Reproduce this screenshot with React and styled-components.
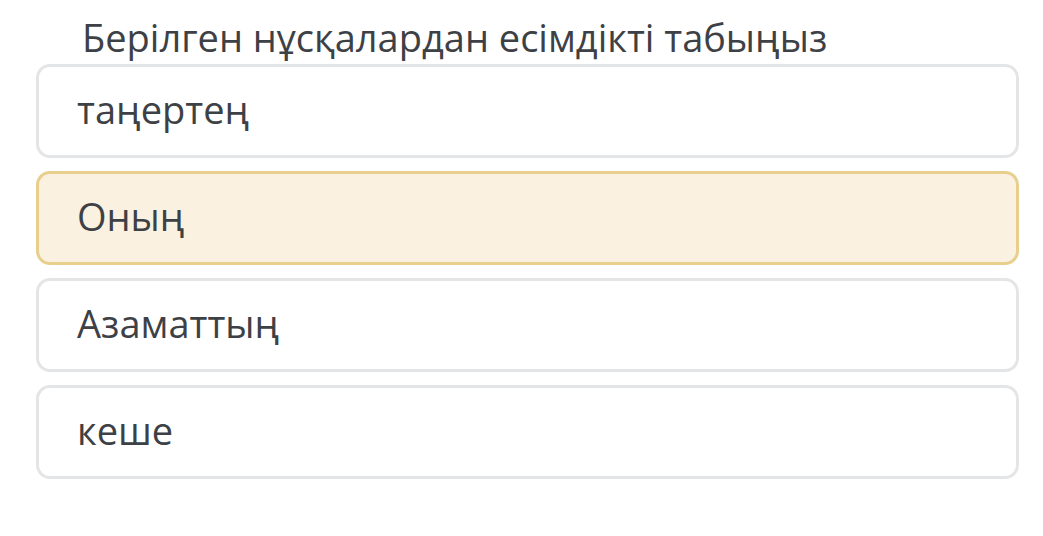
import React from 'react'
import styled, { createGlobalStyle } from 'styled-components'

const Global = createGlobalStyle`
  body {
    margin: 0;
    background: #ffffff;
    font-family: "Open Sans", "Noto Sans", sans-serif;
  }
`

const Page = styled.div`
  width: 1043px;
  height: 536px;
  padding: 12px 24px 0 36px;
  box-sizing: border-box;
  display: flex;
  flex-direction: column;
`

const Title = styled.div`
  font-size: 38px;
  line-height: 50px;
  color: #3d4145;
  padding-left: 46px;
  margin-bottom: 2px;
`

const List = styled.div`
  display: flex;
  flex-direction: column;
  gap: 13px;
`

const Option = styled.div`
  height: 94px;
  box-sizing: border-box;
  border: 3px solid ${p => (p.selected ? '#e8cf8e' : '#e3e5e6')};
  background: ${p => (p.selected ? '#faf1e0' : '#ffffff')};
  border-radius: 14px;
  display: flex;
  align-items: center;
  padding: 0 38px;
  padding-bottom: 4px;
  font-size: 38px;
  color: #3d4145;
`

const options = [
  { text: 'таңертең' },
  { text: 'Оның', selected: true },
  { text: 'Азаматтың' },
  { text: 'кеше' },
]

const App = () => {
  return (
    <Page>
      <Global />
      <Title>Берілген нұсқалардан есімдікті табыңыз</Title>
      <List>
        {options.map(o => (
          <Option key={o.text} selected={o.selected}>
            {o.text}
          </Option>
        ))}
      </List>
    </Page>
  )
}

export default App
